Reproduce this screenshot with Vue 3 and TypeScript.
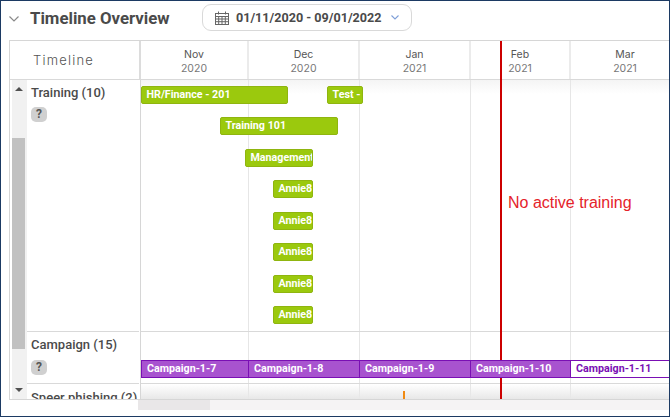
<script setup lang="ts">
interface Bar { label: string; left: number; width: number; top: number; outline?: boolean }
const months = [
  { name: 'Nov', year: 2020, width: 108 },
  { name: 'Dec', year: 2020, width: 111 },
  { name: 'Jan', year: 2021, width: 111 },
  { name: 'Feb', year: 2021, width: 100 },
  { name: 'Mar', year: 2021, width: 110 },
]
const training: Bar[] = [
  { label: 'HR/Finance - 201', left: 0, width: 147, top: 6 },
  { label: 'Test - Training', left: 186, width: 36, top: 6 },
  { label: 'Training 101', left: 79, width: 118, top: 37 },
  { label: 'Management Training', left: 104, width: 68, top: 69 },
  { label: 'Annie8 Training', left: 132, width: 40, top: 100 },
  { label: 'Annie8 Training', left: 132, width: 40, top: 132 },
  { label: 'Annie8 Training', left: 132, width: 40, top: 163 },
  { label: 'Annie8 Training', left: 132, width: 40, top: 195 },
  { label: 'Annie8 Training', left: 132, width: 40, top: 226 },
]
const campaigns: Bar[] = [
  { label: 'Campaign-1-7', left: 0, width: 108, top: 28 },
  { label: 'Campaign-1-8', left: 107, width: 112, top: 28 },
  { label: 'Campaign-1-9', left: 218, width: 112, top: 28 },
  { label: 'Campaign-1-10', left: 329, width: 101, top: 28 },
  { label: 'Campaign-1-11', left: 429, width: 110, top: 28, outline: true },
]
const pos = (b: Bar) => ({ left: b.left + 'px', width: b.width + 'px', top: b.top + 'px' })
const colW = (w: number) => ({ width: w + 'px' })
</script>

<template>
  <div class="frame">
    <header class="top">
      <svg class="chev" width="10" height="6" viewBox="0 0 10 6"><path d="M0.5 0.5 L5 5 L9.5 0.5" fill="none" stroke="#8a8a8a" stroke-width="1.2" /></svg>
      <h1 class="title">Timeline Overview</h1>
      <div class="range">
        <svg class="cal" width="14" height="14" viewBox="0 0 14 14">
          <g fill="none" stroke="#666" stroke-width="1">
            <rect x="0.5" y="2.5" width="13" height="11" />
            <path d="M0.5 5.5H13.5M0.5 8H13.5M0.5 10.7H13.5M3.7 5.5V13.5M7 5.5V13.5M10.3 5.5V13.5M3.5 0.5V3.5M10.5 0.5V3.5" />
          </g>
        </svg>
        <span class="dates">01/11/2020 - 09/01/2022</span>
        <svg class="caret" width="8" height="5" viewBox="0 0 8 5"><path d="M0.5 0.5 L4 4 L7.5 0.5" fill="none" stroke="#7f9fd8" stroke-width="1.1" /></svg>
      </div>
    </header>

    <section class="board">
      <div class="head">
        <div class="corner">Timeline</div>
        <div v-for="m in months" :key="m.name" class="month" :style="colW(m.width)">
          <span class="m-name">{{ m.name }}</span>
          <span class="m-year">{{ m.year }}</span>
        </div>
      </div>

      <div class="body">
        <div class="vscroll">
          <span class="arrow up"></span>
          <span class="thumb"></span>
          <span class="arrow down"></span>
        </div>
        <div class="labels">
          <div class="label l-training">
            <strong>Training (10)</strong>
            <span class="help">?</span>
          </div>
          <div class="label l-campaign">
            <strong>Campaign (15)</strong>
            <span class="help">?</span>
          </div>
          <div class="label l-speer">
            <strong>Speer phishing (2)</strong>
          </div>
        </div>
        <div class="canvas">
          <div class="cols">
            <span v-for="m in months" :key="m.name" class="col" :style="colW(m.width)"></span>
          </div>
          <div class="row r-training">
            <div v-for="(b, i) in training" :key="i" class="bar green" :style="pos(b)"><span>{{ b.label }}</span></div>
            <div class="none">No active training</div>
          </div>
          <div class="row r-campaign">
            <div v-for="(b, i) in campaigns" :key="i" class="bar purple" :class="{ outline: b.outline }" :style="pos(b)"><span>{{ b.label }}</span></div>
          </div>
          <div class="row r-speer">
            <span class="tick"></span>
          </div>
        </div>
        <div class="today"></div>
      </div>
    </section>

    <div class="hscroll"><span class="hthumb"></span></div>
  </div>
</template>

<style>
html, body { margin: 0; background: #fff; overflow: hidden; }
</style>

<style scoped>
.frame {
  box-sizing: border-box;
  width: 670px;
  height: 417px;
  border: 1px solid #1c3a63;
  background: #fff;
  overflow: hidden;
  font-family: Roboto, "Liberation Sans", sans-serif;
}
.top {
  display: flex;
  align-items: center;
  height: 39px;
  padding: 0 0 6px 8px;
  box-sizing: border-box;
}
.chev { margin-right: 11px; margin-top: 2px; }
.title {
  margin: 0;
  font-size: 16.8px;
  font-weight: 700;
  color: #4a4a4a;
  width: 172px;
  flex: none;
}
.range {
  box-sizing: border-box;
  flex: none;
  width: 210px;
  height: 27px;
  border: 1px solid #d9d9d9;
  border-radius: 9px;
  display: flex;
  align-items: center;
  padding-left: 12px;
}
.cal { margin-right: 7px; }
.dates { font-size: 12.6px; font-weight: 700; color: #4a4a4a; white-space: nowrap; }
.caret { margin-left: 9px; }

.board {
  box-sizing: border-box;
  margin-left: 8px;
  height: 360px;
  border-top: 1px solid #d6d6d6;
  border-left: 1px solid #d6d6d6;
  border-bottom: 1px solid #d6d6d6;
  display: flex;
  flex-direction: column;
  overflow: hidden;
}
.head {
  display: flex;
  flex: none;
  height: 39px;
  box-sizing: border-box;
  border-bottom: 1px solid #d9d9d9;
}
.corner {
  box-sizing: border-box;
  flex: none;
  width: 131px;
  border-right: 2px solid #dcdcdc;
  padding: 11px 0 0 23px;
  font-family: Inter, sans-serif;
  font-size: 13px;
  font-weight: 300;
  letter-spacing: 1.2px;
  color: #555;
}
.month {
  box-sizing: border-box;
  flex: none;
  border-right: 2px solid #ebebeb;
  display: flex;
  flex-direction: column;
  align-items: center;
  padding-top: 7px;
  font-family: Inter, sans-serif;
  font-size: 10.5px;
  line-height: 13.5px;
}
.m-name { color: #555; }
.m-year { color: #777; }

.body { display: flex; flex: 1; min-height: 0; position: relative; }
.vscroll {
  flex: none;
  width: 15px;
  margin-left: 2px;
  background: #f1f1f1;
  position: relative;
}
.thumb {
  position: absolute;
  left: 0;
  top: 58px;
  width: 13px;
  height: 211px;
  background: #c1c1c1;
}
.arrow { position: absolute; left: 3px; width: 0; height: 0; border-left: 4px solid transparent; border-right: 4px solid transparent; }
.up { top: 7px; border-bottom: 4px solid #505050; }
.down { top: 308px; border-top: 4px solid #505050; }

.labels {
  box-sizing: border-box;
  flex: none;
  width: 113px;
  display: flex;
  flex-direction: column;
  overflow: hidden;
}
.label {
  box-sizing: border-box;
  flex: none;
  padding: 5px 0 0 4px;
  border-bottom: 1px solid #d9d9d9;
  margin-right: 1px;
  font-size: 13px;
  line-height: 16px;
  color: #4a4a4a;
  white-space: nowrap;
}
.label strong { display: block; font-weight: 500; }
.l-training { height: 252px; }
.l-campaign { height: 52px; }
.l-speer { height: 30px; border-bottom: 0; padding-top: 6px; }
.help {
  display: block;
  width: 16px;
  height: 15px;
  margin-top: 6px;
  border-radius: 5px;
  background: #d0d0d0;
  color: #555;
  font-size: 12px;
  font-weight: 700;
  line-height: 15px;
  text-align: center;
}
.l-campaign .help { margin-top: 7px; }

.canvas {
  flex: none;
  width: 528px;
  position: relative;
  border-left: 1px solid #d6d6d6;
  overflow: hidden;
}
.canvas::before {
  content: "";
  position: absolute;
  left: 0; right: 0; top: 0;
  height: 14px;
  background: linear-gradient(#f0f0f0, #fff);
  opacity: .7;
}
.canvas::after {
  content: "";
  position: absolute;
  left: 0; right: 0; bottom: 0;
  height: 15px;
  background: linear-gradient(rgba(255,255,255,0), #e8e8e8);
  z-index: 3;
}
.cols { position: absolute; inset: 0; display: flex; }
.col { box-sizing: border-box; flex: none; border-right: 1px solid #e6e6e6; }
.today {
  position: absolute;
  left: 490px;
  top: -39px;
  bottom: 0;
  width: 2px;
  background: #cc0000;
  z-index: 4;
}
.row { position: relative; box-sizing: border-box; border-bottom: 1px solid #d9d9d9; }
.r-training { height: 252px; }
.r-campaign { height: 52px; }
.r-speer { height: 30px; border-bottom: 0; }
.bar {
  position: absolute;
  box-sizing: border-box;
  height: 18px;
  overflow: hidden;
  white-space: nowrap;
  font-size: 10.7px;
  font-weight: 700;
  line-height: 16px;
  color: #fff;
  padding-left: 4.5px;
  z-index: 5;
}
.green { background: #9bc90d; border: 1px solid #8fb50f; border-radius: 2px; }
.purple { background: #a853cf; border: 1px solid #7a0fb4; padding-left: 5px; }
.outline { background: #fff; color: #7a0fb4; }
.none {
  position: absolute;
  left: 367px;
  top: 113px;
  font-family: "Liberation Sans", Arial, sans-serif;
  font-size: 16px;
  line-height: 20px;
  color: #e5232a;
  white-space: nowrap;
}
.tick { position: absolute; left: 262px; top: 7px; width: 2px; height: 9px; background: #f08a13; z-index: 4; }

.hscroll {
  margin-left: 137px;
  height: 10px;
  background: #f5f3f4;
}
.hthumb { display: block; width: 72px; height: 10px; background: #e9e7e8; }
</style>
